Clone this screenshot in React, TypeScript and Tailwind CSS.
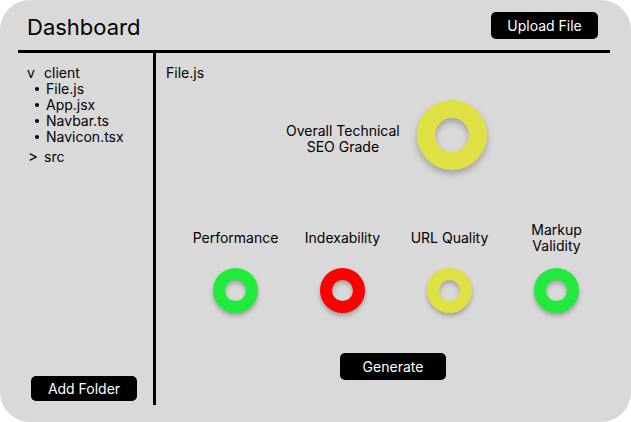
const files = ['File.js', 'App.jsx', 'Navbar.ts', 'Navicon.tsx']

const metrics = [
  { label: ['Performance'], color: 'border-[#22ea3c]' },
  { label: ['Indexability'], color: 'border-[#ff0000]' },
  { label: ['URL Quality'], color: 'border-[#dfe043]' },
  { label: ['Markup', 'Validity'], color: 'border-[#22ea3c]' },
]

function Button({ children, className = '' }: { children: string; className?: string }) {
  return (
    <button className={`flex items-center justify-center bg-black text-white text-[14px] rounded-[5px] ${className}`}>
      {children}
    </button>
  )
}

export default function App() {
  return (
    <div className="w-[631px] h-[422px] bg-white">
      <div className="h-full rounded-[30px] bg-[#d9d9d9] flex flex-col text-black font-['Inter',sans-serif]">
        <header className="h-[50px] flex items-center justify-between pl-[27px] pr-[33px]">
          <h1 className="text-[22px] leading-none mt-[4px]">Dashboard</h1>
          <Button className="w-[107px] h-[27px]">Upload File</Button>
        </header>
        <div className="ml-[18px] mr-[21px] h-[3px] bg-black" />

        <div className="flex flex-1 ml-[18px] pb-[17px]">
          <aside className="w-[138px] border-r-[3px] border-black flex flex-col justify-between pt-[12px] pb-[4px]">
            <div className="text-[14px] leading-[16px]">
              <div className="flex pl-[9px]">
                <span className="w-[17px]">v</span>
                <span>client</span>
              </div>
              <ul>
                {files.map(f => (
                  <li key={f} className="flex items-center pl-[17px]">
                    <span className="w-[4px] h-[4px] rounded-full bg-black mr-[7px]" />
                    <span>{f}</span>
                  </li>
                ))}
              </ul>
              <div className="flex pl-[10px] mt-[4px]">
                <span className="w-[16px] text-[15px]">&gt;</span>
                <span>src</span>
              </div>
            </div>
            <Button className="ml-[13px] w-[106px] h-[25px]">Add Folder</Button>
          </aside>

          <main className="flex-1 flex flex-col pt-[12px] text-[14px] leading-[16px]">
            <div className="pl-[10px]">File.js</div>

            <div className="flex items-start ml-[130px] mt-[19px] gap-[17px]">
              <div className="text-center mt-[23px]">
                <div>Overall Technical</div>
                <div>SEO Grade</div>
              </div>
              <div className="w-[70px] h-[70px] rounded-full border-[18px] border-[#dfe043] drop-shadow-[0_4px_3px_rgba(0,0,0,0.25)]" />
            </div>

            <div className="flex ml-[26px] mt-[52px]">
              {metrics.map(m => (
                <div key={m.label.join(' ')} className="w-[107px] flex flex-col items-center">
                  <div className="h-[32px] flex flex-col justify-center text-center">
                    {m.label.map(l => (
                      <div key={l}>{l}</div>
                    ))}
                  </div>
                  <div className={`mt-[14px] w-[45px] h-[45px] rounded-full border-[12px] ${m.color} drop-shadow-[0_3px_2px_rgba(0,0,0,0.25)]`} />
                </div>
              ))}
            </div>

            <Button className="ml-[184px] mt-[40px] w-[106px] h-[27px]">Generate</Button>
          </main>
        </div>
      </div>
    </div>
  )
}
